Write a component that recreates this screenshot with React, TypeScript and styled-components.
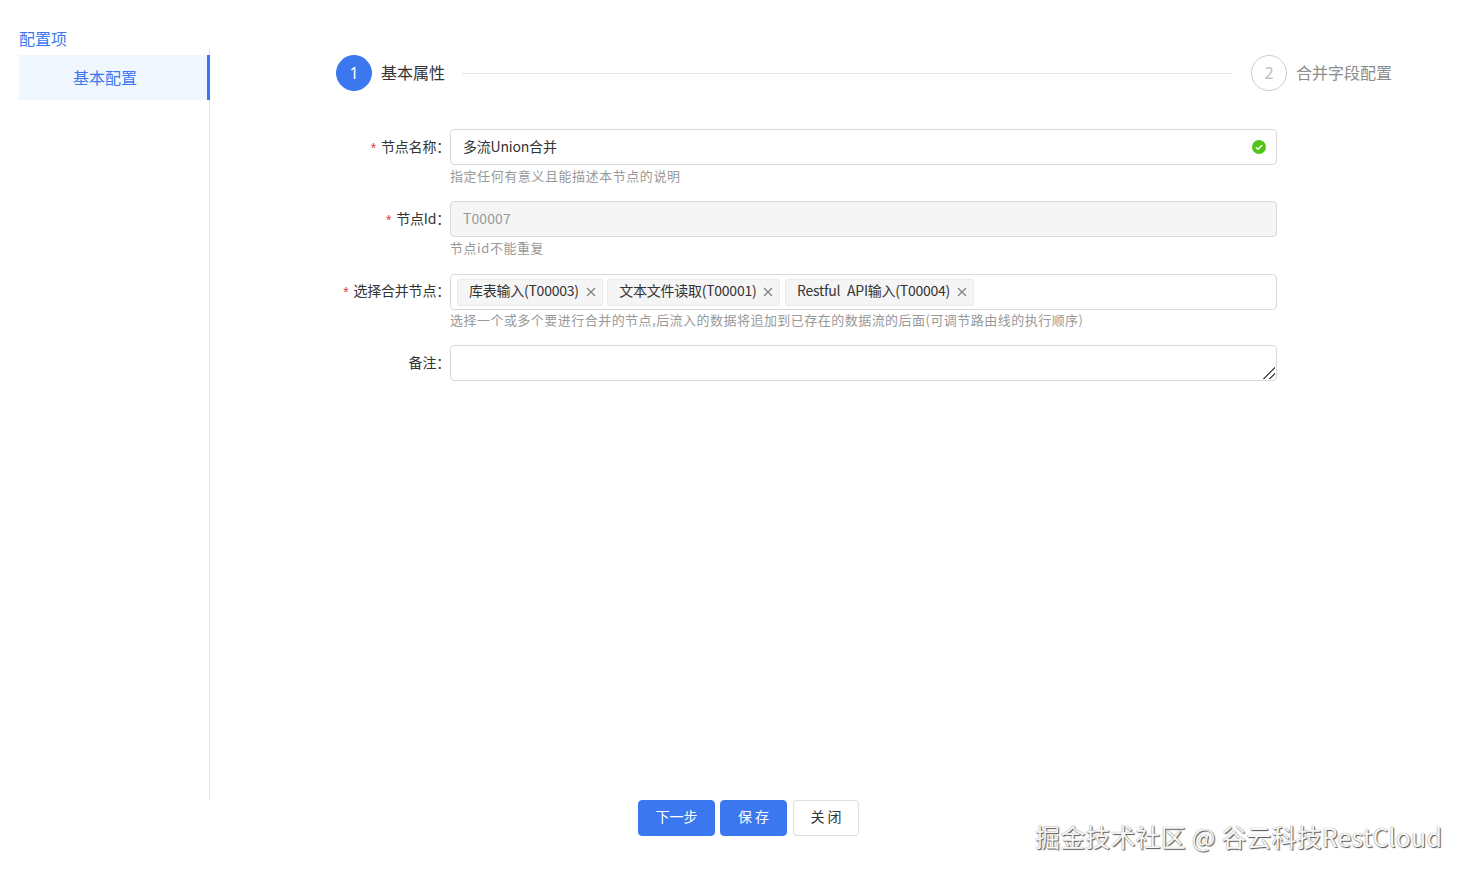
import React from "react";
import styled, { createGlobalStyle } from "styled-components";

const FONT = `"Noto Sans CJK SC", "Noto Sans", sans-serif`;
const BLUE = "#3b78f0";

const Global = createGlobalStyle`
  html, body { margin: 0; padding: 0; background: #fff; }
  body { font-family: ${FONT}; color: #333; }
  * { box-sizing: border-box; }
`;

const Page = styled.div`
  position: relative;
  width: 1467px;
  height: 876px;
  overflow: hidden;
  display: flex;
  flex-direction: column;
`;
const Body = styled.div`
  display: flex;
  height: 800px;
`;
const Side = styled.aside`
  width: 210px;
  flex: none;
  display: flex;
  flex-direction: column;
  padding-top: 29px;
`;
const SideTitle = styled.div`
  height: 19px;
  margin-left: 19px;
  font-size: 16px;
  line-height: 18px;
  color: ${BLUE};
`;
const SideList = styled.div`
  flex: 1;
  border-right: 1px solid #e4e4e4;
  padding: 7px 0 0 19px;
`;
const SideItem = styled.div`
  height: 45px;
  margin-right: -1px;
  background: #f0f7ff;
  border-right: 3px solid ${BLUE};
  color: ${BLUE};
  font-size: 16px;
  line-height: 44px;
  text-align: center;
  padding-right: 16px;
`;
const Main = styled.main`
  flex: 1;
  min-width: 0;
  padding-top: 55px;
`;
const Steps = styled.div`
  display: flex;
  align-items: center;
  margin: 0 75px 0 126px;
  height: 36px;
`;
const StepIcon = styled.div<{ $active?: boolean }>`
  width: 36px;
  height: 36px;
  flex: none;
  border-radius: 50%;
  background: ${(p) => (p.$active ? BLUE : "#fff")};
  border: 1px solid ${(p) => (p.$active ? BLUE : "#ccc")};
  color: ${(p) => (p.$active ? "#fff" : "#bbb")};
  font-family: "Noto Sans", sans-serif;
  font-size: 16px;
  line-height: 34px;
  text-align: center;
`;
const StepTitle = styled.div<{ $active?: boolean }>`
  margin-left: 9px;
  padding-bottom: 2px;
  font-size: 16px;
  color: ${(p) => (p.$active ? "#333" : "#8c8c8c")};
  white-space: nowrap;
`;
const StepLine = styled.div`
  flex: 1;
  height: 1px;
  background: #e6e6e6;
  margin: 0 18px 0 17px;
`;
const Form = styled.form`
  margin: 38px 0 0 0;
  display: flex;
  flex-direction: column;
`;
const Row = styled.div`
  display: grid;
  grid-template-columns: 240px 827px;
  height: 72px;
`;
const Label = styled.label`
  height: 36px;
  display: flex;
  justify-content: flex-end;
  align-items: center;
  font-size: 14px;
  color: #333;
  white-space: nowrap;
  letter-spacing: -0.2px;
  padding-bottom: 3px;
`;
const Star = styled.span`
  color: #e5383b;
  font-family: "Liberation Sans", sans-serif;
  font-size: 14px;
  margin-right: 5px;
  transform: translateY(2px);
`;
const Control = styled.div`
  display: flex;
  flex-direction: column;
  position: relative;
`;
const Input = styled.input<{ $disabled?: boolean }>`
  width: 100%;
  height: 36px;
  border: 1px solid #d9d9d9;
  border-radius: 4px;
  padding: 0 12px 2px;
  outline: none;
  font-family: ${FONT};
  font-size: 14px;
  letter-spacing: ${(p) => (p.$disabled ? "0.1px" : "-0.2px")};
  color: ${(p) => (p.$disabled ? "#999" : "#333")};
  background: ${(p) => (p.$disabled ? "#f5f5f5" : "#fff")};
`;
const Help = styled.div`
  margin-top: 2px;
  font-size: 13px;
  line-height: 17px;
  color: #999;
  white-space: nowrap;
  letter-spacing: 0.56px;
`;
const LongHelp = styled(Help)`
  margin-top: 1px;
  letter-spacing: 0.47px;
`;
const Check = styled.svg`
  position: absolute;
  right: 11px;
  top: 11px;
  width: 14px;
  height: 14px;
`;
const TagBox = styled.div`
  height: 36px;
  margin-top: 1px;
  border: 1px solid #d9d9d9;
  border-radius: 4px;
  display: flex;
  align-items: center;
  gap: 4.5px;
  padding-left: 6px;
`;
const Tag = styled.div<{ $wide?: boolean }>`
  height: 27px;
  display: flex;
  align-items: center;
  justify-content: space-between;
  background: #f5f5f5;
  border: 1px solid #ebebeb;
  border-radius: 2px;
  padding: 0 6px 4px 11px;
  font-size: 14px;
  color: #333;
  white-space: nowrap;
  letter-spacing: -0.25px;
  word-spacing: ${(p) => (p.$wide ? "4px" : "0")};
`;
const TagClose = styled.svg`
  width: 10px;
  height: 10px;
  margin: 4px 0 0 7px;
  flex: none;
`;
const TextArea = styled.textarea`
  display: block;
  width: 100%;
  height: 36px;
  min-height: 36px;
  border: 1px solid #d9d9d9;
  border-radius: 4px;
  outline: none;
  resize: vertical;
  font-family: ${FONT};
  &::-webkit-resizer {
    background:
      linear-gradient(135deg, transparent 46%, #555 46%, #555 56%, transparent 56%) 2px 2px / 12px 12px no-repeat,
      linear-gradient(135deg, transparent 46%, #555 46%, #555 60%, transparent 60%) 8px 8px / 6px 6px no-repeat;
  }
`;
const Footer = styled.div`
  height: 36px;
  display: flex;
  padding-left: 638px;
`;
const Button = styled.button<{ $primary?: boolean; $w: number; $ml: number }>`
  width: ${(p) => p.$w}px;
  height: 36px;
  margin-left: ${(p) => p.$ml}px;
  border-radius: 4px;
  border: 1px solid ${(p) => (p.$primary ? BLUE : "#dedede")};
  background: ${(p) => (p.$primary ? BLUE : "#fff")};
  color: ${(p) => (p.$primary ? "#fff" : "#333")};
  font-family: ${FONT};
  font-size: 14px;
  padding: 0 0 5px;
`;
const Watermark = styled.div`
  position: absolute;
  left: 1035px;
  top: 818px;
  font-size: 25px;
  line-height: 37px;
  letter-spacing: 0.15px;
  color: #f7f7f7;
  text-shadow: 1px 1px 1px #555, 0 0 1px #777;
  white-space: nowrap;
`;

const CloseIcon = () => (
  <TagClose viewBox="0 0 10 10" fill="none" stroke="#808080" strokeWidth="1.2">
    <path d="M1 1l8 8M9 1l-8 8" />
  </TagClose>
);

export default function App() {
  return (
    <Page>
      <Global />
      <Body>
        <Side>
          <SideTitle>配置项</SideTitle>
          <SideList>
            <SideItem>基本配置</SideItem>
          </SideList>
        </Side>
        <Main>
          <Steps>
            <StepIcon $active>1</StepIcon>
            <StepTitle $active>基本属性</StepTitle>
            <StepLine />
            <StepIcon>2</StepIcon>
            <StepTitle>合并字段配置</StepTitle>
          </Steps>
          <Form>
            <Row>
              <Label><Star>*</Star>节点名称：</Label>
              <Control>
                <Input defaultValue="多流Union合并" />
                <Check viewBox="0 0 14 14">
                  <circle cx="7" cy="7" r="7" fill="#52c41a" />
                  <path d="M3.8 7.2l2.2 2.1 4.2-4.4" fill="none" stroke="#fff" strokeWidth="1.4" />
                </Check>
                <Help>指定任何有意义且能描述本节点的说明</Help>
              </Control>
            </Row>
            <Row>
              <Label><Star>*</Star>节点Id：</Label>
              <Control>
                <Input $disabled disabled defaultValue="T00007" />
                <Help>节点id不能重复</Help>
              </Control>
            </Row>
            <Row>
              <Label><Star>*</Star>选择合并节点：</Label>
              <Control>
                <TagBox>
                  <Tag>库表输入(T00003)<CloseIcon /></Tag>
                  <Tag>文本文件读取(T00001)<CloseIcon /></Tag>
                  <Tag $wide>Restful API输入(T00004)<CloseIcon /></Tag>
                </TagBox>
                <LongHelp>选择一个或多个要进行合并的节点,后流入的数据将追加到已存在的数据流的后面(可调节路由线的执行顺序)</LongHelp>
              </Control>
            </Row>
            <Row>
              <Label>备注：</Label>
              <Control>
                <TextArea />
              </Control>
            </Row>
          </Form>
        </Main>
      </Body>
      <Footer>
        <Button $primary $w={77} $ml={0}>下一步</Button>
        <Button $primary $w={67} $ml={5}>保 存</Button>
        <Button $w={66} $ml={6}>关 闭</Button>
      </Footer>
      <Watermark>掘金技术社区 @ 谷云科技RestCloud</Watermark>
    </Page>
  );
}
